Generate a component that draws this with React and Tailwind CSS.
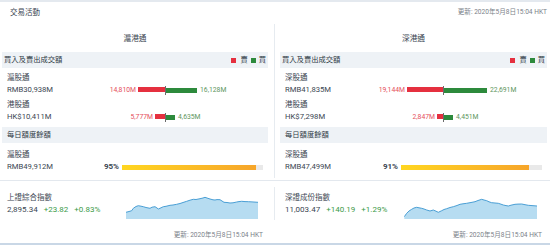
import React from "react";

const leftPts =
  "0,16.3 3,15.5 5.7,14.7 7.3,12.3 10,10.5 12.3,9.7 15,10.2 17.3,10.7 20,11.5 24,12.3 26,11.2 29,10.7 31,12 32.3,13 35,11.8 37.3,10.7 40,10.3 44,9.3 47,9 50.7,8.3 54,7.5 57,6.5 60.7,5.3 64,4.2 67.3,3.3 70,3.5 74,2.7 77,2 79,1.3 81,2 84,3 87,3.8 89,4 91,3.6 94,3.7 96,5 98,6.3 101,6.5 104,7 107,6.8 110.7,6 113,5.6 115.7,5.3 119,5.6 122.3,5.7 126,5.9 129,6.1 132,6.3";
const rightPts =
  "0.3,20.7 2.7,17.3 5,15 7.7,13.3 10,12 12.7,11.3 15,11.8 17.7,12.3 20,13 22.7,14 26,15 29.3,14 32,15.2 34.3,16.3 37.7,14.7 40,13.5 42.7,12.7 46,11.5 49.3,10.7 53,9.5 56,8.3 59,7.8 62.7,7.3 67,6.5 71,5.7 74,4.5 77.7,3.3 80,4 82.7,4.7 85,5.8 87.7,6.7 91,7 94.3,7.3 97,8.2 99.3,9 102,9.6 104.3,10 107,9.2 111,8.3 114,8.1 117.7,8 121,8.7 124.3,9.3 128,9.6 133,10";

function Spark({ pts, w }) {
  const first = pts.split(" ")[0].split(",")[0];
  return (
    <svg width={w} height="23" viewBox={`0 0 ${w} 23`} className="mt-[4px] block">
      <path d={`M${first},23 L${pts.replace(/ /g, " L")} L${w},23 Z`} fill="#b6dcf1" />
      <polyline points={pts} fill="none" stroke="#4a9fd5" strokeWidth="1" />
    </svg>
  );
}

function FlowRow({ label, value, sell, sellW, buy, buyW, pt }) {
  return (
    <div className={`pl-[5px] ${pt}`}>
      <div className="text-[7.5px] leading-[12px] text-[#3b4652]">{label}</div>
      <div className="flex items-center h-[12px]">
        <div className="w-[158px] flex items-center justify-between">
          <span className="text-[7.7px] text-[#3b4652]">{value}</span>
          <div className="flex items-center">
            <span className="text-[6.8px] text-[#e5505c] mr-[2px]">{sell}</span>
            <div className="h-[5px] bg-[#e5303f]" style={{ width: sellW }} />
          </div>
        </div>
        <div className="w-px h-[9px] bg-[#6b6b6b]" />
        <div className="flex items-center">
          <div className="h-[5px] bg-[#2d8a3c]" style={{ width: buyW }} />
          <span className="text-[6.8px] text-[#5e965e] ml-[3px]">{buy}</span>
        </div>
      </div>
    </div>
  );
}

function TopCol({ title, r1, r2, q, cls }) {
  return (
    <div className={`flex flex-col ${cls}`}>
      <div className="h-[28px] pt-[10px] text-center text-[7.7px] leading-[10px] text-[#3b4652]">{title}</div>
      <div className="h-[16px] bg-[#eef2f6] flex items-center justify-between pl-[2px] pr-[2px]">
        <span className="text-[7.3px] text-[#2f3a45]">買入及賣出成交額</span>
        <div className="flex items-center text-[7.3px] text-[#2f3a45]">
          <span className="w-[5px] h-[5px] bg-[#e5303f]" />
          <span className="ml-[4px]">賣</span>
          <span className="w-[5px] h-[5px] bg-[#2d8a3c] ml-[3px]" />
          <span className="ml-[3px]">買</span>
        </div>
      </div>
      <FlowRow pt="pt-[4px]" {...r1} />
      <FlowRow pt="pt-[3px]" {...r2} />
      <div className="mt-[4px] h-[16px] bg-[#eef2f6] flex items-center pl-[5px]">
        <span className="text-[7.3px] text-[#2f3a45]">每日額度餘額</span>
      </div>
      <div className="pl-[5px] pr-[5px] pt-[6px]">
        <div className="text-[7.5px] leading-[12px] text-[#3b4652]">{q.label}</div>
        <div className="flex items-center h-[12px]">
          <span className="flex-1 text-[7.7px] text-[#3b4652]">{q.value}</span>
          <span className="text-[8px] font-bold text-[#3b4652]">{q.pct}%</span>
          <div className="ml-[3px] w-[141px] h-[5px] bg-[#e9e9e9]">
            <div
              className="h-full bg-gradient-to-r from-[#ffd620] to-[#f6a52a]"
              style={{ width: `${q.pct}%` }}
            />
          </div>
        </div>
      </div>
    </div>
  );
}

function BottomCol({ name, price, chg, pctChg, pts, w, cls }) {
  return (
    <div className={`flex flex-col ${cls}`}>
      <div className="h-[48px] flex justify-between pt-[11px] pl-[5px] pr-[10px]">
        <div>
          <div className="text-[7.5px] leading-[12px] text-[#3b4652]">{name}</div>
          <div className="flex items-center h-[12px] text-[8px]">
            <span className="text-[#3b4652]">{price}</span>
            <span className="ml-[6px] text-[#3c9a48]">{chg}</span>
            <span className="ml-[6px] text-[#3c9a48]">{pctChg}</span>
          </div>
        </div>
        <Spark pts={pts} w={w} />
      </div>
      <div className="text-right pr-[5px] leading-[12px] text-[6.6px] text-[#7b8189]">
        更新: 2020年5月8日15:04 HKT
      </div>
    </div>
  );
}

export default function App() {
  return (
    <div className="w-[550px] h-[245px] bg-white flex flex-col overflow-hidden font-['Roboto','Noto_Sans_CJK_TC',sans-serif]">
      <div className="h-[2px] bg-[#e4e9ef]" />
      <div className="h-[22px] flex items-center justify-between pl-[10px] pr-[3px]">
        <span className="text-[7.5px] text-[#3b4652]">交易活動</span>
        <span className="text-[6.6px] text-[#7b8189]">更新: 2020年5月8日15:04 HKT</span>
      </div>
      <div className="h-[157px] flex pl-[2px] pr-[3px] border-b border-[#e3e8ee]">
        <TopCol
          cls="w-[266px]"
          title="滬港通"
          r1={{ label: "滬股通", value: "RMB30,938M", sell: "14,810M", sellW: 27, buy: "16,128M", buyW: 31 }}
          r2={{ label: "港股通", value: "HK$10,411M", sell: "5,777M", sellW: 10, buy: "4,635M", buyW: 9 }}
          q={{ label: "滬股通", value: "RMB49,912M", pct: 95 }}
        />
        <div className="w-[12px] flex justify-center pb-[2px]">
          <div className="w-px h-full bg-[#e6ebf0]" />
        </div>
        <TopCol
          cls="flex-1"
          title="深港通"
          r1={{ label: "深股通", value: "RMB41,835M", sell: "19,144M", sellW: 36, buy: "22,691M", buyW: 43 }}
          r2={{ label: "港股通", value: "HK$7,298M", sell: "2,847M", sellW: 6, buy: "4,451M", buyW: 9 }}
          q={{ label: "深股通", value: "RMB47,499M", pct: 91 }}
        />
      </div>
      <div className="h-[62px] flex pl-[2px] pr-[3px]">
        <BottomCol
          cls="w-[266px]"
          name="上證綜合指數"
          price="2,895.34"
          chg="+23.82"
          pctChg="+0.83%"
          pts={leftPts}
          w={132}
        />
        <div className="w-[12px] flex justify-center pt-[6px]">
          <div className="w-px h-[33px] bg-[#e6ebf0]" />
        </div>
        <BottomCol
          cls="flex-1"
          name="深證成份指數"
          price="11,003.47"
          chg="+140.19"
          pctChg="+1.29%"
          pts={rightPts}
          w={133}
        />
      </div>
      <div className="h-[2px] bg-[#c9d7e6]" />
    </div>
  );
}
